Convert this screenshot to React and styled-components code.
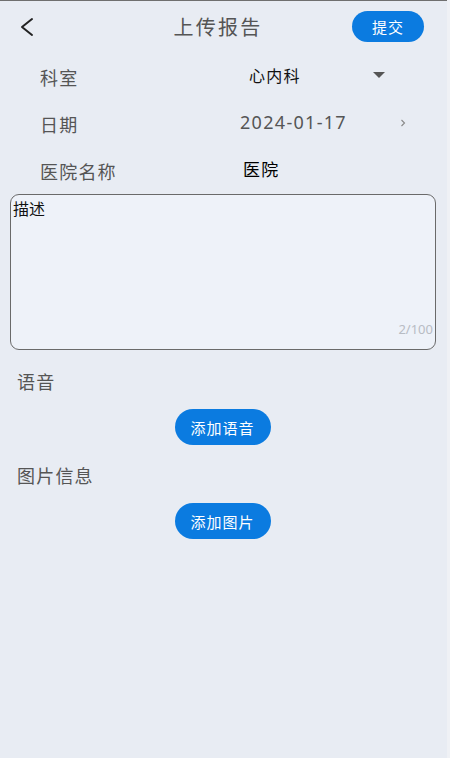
import React from 'react';
import styled, { createGlobalStyle } from 'styled-components';

const GlobalStyle = createGlobalStyle`
    html, body {
        margin: 0;
        padding: 0;
        background: #eff1f5;
    }
    body {
        font-family: "Noto Sans CJK SC", "Noto Sans", sans-serif;
    }
`;

// 页面主体
const Page = styled.div`
    width: calc(100% - 3px);
    min-height: 758px;
    background: #e8ecf3;
    border-top: 1px solid #6f6f6f;
    box-sizing: border-box;
    display: flex;
    flex-direction: column;
`;

// 顶部栏
const TopBar = styled.div`
    height: 51px;
    display: flex;
    align-items: center;
    padding: 0 23px 0 16px;
`;

const BackButton = styled.div`
    width: 22px;
    height: 22px;
    display: flex;
    align-items: center;
    justify-content: center;
    cursor: pointer;
`;

const Title = styled.div`
    flex: 1;
    text-align: center;
    font-size: 20px;
    letter-spacing: 2.3px;
    color: #555;
    margin-left: 46px;
`;

const PillButton = styled.button`
    border: none;
    background: #0b7be0;
    color: #fff;
    font-family: "Noto Sans CJK SC", sans-serif;
    font-size: 15px;
    letter-spacing: 1px;
    border-radius: 999px;
    width: ${p => p.$width || 96}px;
    height: ${p => p.$height || 36}px;
    padding: 0;
    cursor: pointer;
`;

// 表单行
const Row = styled.div`
    height: 47px;
    display: flex;
    align-items: center;
    padding-left: 40px;
`;

const Label = styled.div`
    width: 200px;
    font-size: 18px;
    letter-spacing: 1.2px;
    color: #555;
    padding-top: 2px;
`;

const Value = styled.div`
    margin-left: ${p => p.$indent || 0}px;
    font-size: ${p => p.$size || 16}px;
    letter-spacing: 1.3px;
    color: ${p => p.$color || '#111'};
    width: ${p => p.$width || 'auto'};
    font-family: ${p => p.$digits ? '"Noto Sans", sans-serif' : 'inherit'};
    padding-bottom: 2px;
`;

const Arrow = styled.div`
    display: flex;
    align-items: center;
`;

// 描述输入框
const DescBox = styled.div`
    margin: 1px 11px 0 10px;
    height: 156px;
    box-sizing: border-box;
    border: 1px solid #6a6a6a;
    border-radius: 9px;
    background: #eef2f9;
    display: flex;
    flex-direction: column;
    justify-content: space-between;
    padding: 3px 2px 11px 2px;
`;

const DescText = styled.div`
    font-size: 16px;
    color: #111;
    line-height: 20px;
`;

const Counter = styled.div`
    align-self: flex-end;
    font-family: "Noto Sans", sans-serif;
    font-size: 13px;
    color: #b8bcc4;
`;

const SectionTitle = styled.div`
    margin-top: ${p => p.$top || 20}px;
    padding-left: 17px;
    font-size: 18px;
    line-height: 22px;
    letter-spacing: 1.2px;
    color: #555;
`;

const Center = styled.div`
    display: flex;
    justify-content: center;
    margin-top: 17px;
    padding-right: 2px;
`;

const App = () => {
    return (
        <>
            <GlobalStyle/>
            <Page>
                <TopBar>
                    <BackButton>
                        <svg width="20" height="22" viewBox="0 0 20 22">
                            <path d="M15 3 L5 11 L15 19" fill="none" stroke="#222" strokeWidth="2" strokeLinecap="round" strokeLinejoin="round"/>
                        </svg>
                    </BackButton>
                    <Title>上传报告</Title>
                    <PillButton $width={72} $height={31}>提交</PillButton>
                </TopBar>

                <Row>
                    <Label>科室</Label>
                    <Value $indent={9} $width="124px">心内科</Value>
                    <Arrow>
                        <svg width="12" height="7" viewBox="0 0 12 7">
                            <path d="M0 0 H12 L6 6 Z" fill="#555"/>
                        </svg>
                    </Arrow>
                </Row>
                <Row>
                    <Label>日期</Label>
                    <Value $digits $size={18} $color="#555" $width="160px">2024-01-17</Value>
                    <Arrow>
                        <svg width="6" height="8" viewBox="0 0 6 8">
                            <path d="M1.5 1 L4.5 4 L1.5 7" fill="none" stroke="#888" strokeWidth="1.1"/>
                        </svg>
                    </Arrow>
                </Row>
                <Row>
                    <Label>医院名称</Label>
                    <Value $indent={3} $size={17} $color="#000">医院</Value>
                </Row>

                <DescBox>
                    <DescText>描述</DescText>
                    <Counter>2/100</Counter>
                </DescBox>

                <SectionTitle $top={20}>语音</SectionTitle>
                <Center>
                    <PillButton>添加语音</PillButton>
                </Center>

                <SectionTitle $top={19}>图片信息</SectionTitle>
                <Center>
                    <PillButton>添加图片</PillButton>
                </Center>
            </Page>
        </>
    );
};

export default App;
